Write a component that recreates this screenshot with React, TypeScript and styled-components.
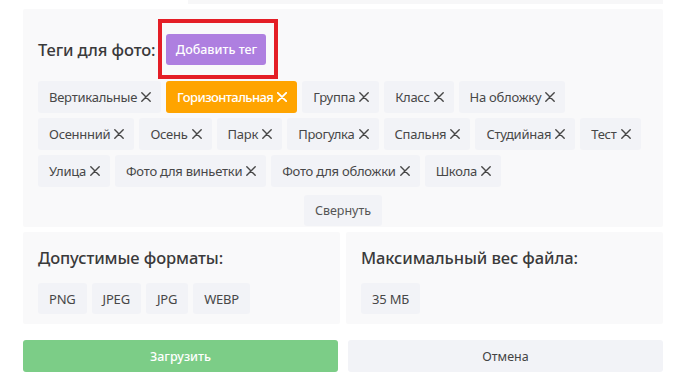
import React from "react";
import styled, { createGlobalStyle } from "styled-components";

const GlobalStyle = createGlobalStyle`
  html, body { margin: 0; padding: 0; background: #ffffff; }
  body { font-family: "Noto Sans", "Open Sans", sans-serif; color: #444; }
  * { box-sizing: border-box; }
`;

const Page = styled.div`
  width: 682px;
  height: 387px;
  padding: 0 19px 0 23px;
  display: flex;
  flex-direction: column;
  overflow: hidden;
`;

const TopStrip = styled.div`
  margin-left: 165px;
  height: 4px;
  background: #f7f7f8;
`;

const Panel = styled.section`
  background: #f9f9fa;
  border-radius: 2px;
`;

const TagPanel = styled(Panel)`
  margin-top: 5px;
  padding: 25px 15px 1px 15px;
  display: flex;
  flex-direction: column;
`;

const HeaderRow = styled.div`
  display: flex;
  align-items: center;
  gap: 11px;
  height: 31px;
`;

const Title = styled.h3`
  margin: 0;
  font-size: 16.5px;
  font-weight: 500;
  color: #3a3a3a;
  letter-spacing: -0.1px;
`;

const Highlight = styled.div`
  position: relative;
  display: flex;
  &::after {
    content: "";
    position: absolute;
    top: -15px;
    left: -8px;
    right: -12px;
    bottom: -14px;
    border: 4px solid #e41e26;
    pointer-events: none;
  }
`;

const AddButton = styled.button`
  height: 31px;
  width: 100px;
  border: none;
  border-radius: 3px;
  background: #ae7fe0;
  color: #fff;
  font-family: inherit;
  font-size: 12.5px;
  font-weight: 500;
  padding: 0;
  cursor: pointer;
`;

const TagList = styled.div`
  margin-top: 16px;
  display: flex;
  flex-wrap: wrap;
  gap: 5px 5px;
`;

const Chip = styled.span<{ $active?: boolean }>`
  height: 32px;
  display: inline-flex;
  align-items: center;
  gap: 4px;
  padding: 0 10px 0 11px;
  border-radius: 3px;
  background: ${(p) => (p.$active ? "#ffa400" : "#f2f3f7")};
  color: ${(p) => (p.$active ? "#fff" : "#474747")};
  font-size: 13px;
  font-weight: ${(p) => (p.$active ? 500 : 400)};
  letter-spacing: ${(p) => (p.$active ? "-0.6px" : "-0.25px")};
  white-space: nowrap;
`;

const CloseIcon = styled.svg`
  width: 10px;
  height: 10px;
  flex: none;
`;

const Collapse = styled.button`
  align-self: center;
  margin-top: 8px;
  height: 31px;
  padding: 0 11px;
  border: none;
  border-radius: 3px;
  background: #f2f3f7;
  color: #555;
  font-family: inherit;
  font-size: 12.5px;
`;

const InfoGrid = styled.div`
  margin-top: 5px;
  display: grid;
  grid-template-columns: 317px 317px;
  gap: 6px;
`;

const InfoPanel = styled(Panel)`
  height: 92px;
  padding: 15px 15px 0 15px;
`;

const InfoTitle = styled.h3`
  margin: 0 0 14px 0;
  font-size: 16.5px;
  font-weight: 500;
  color: #3a3a3a;
  line-height: 22px;
  letter-spacing: -0.1px;
`;

const ChipRow = styled.div`
  display: flex;
  gap: 5px;
`;

const FormatChip = styled.span`
  height: 31px;
  display: inline-flex;
  align-items: center;
  padding: 0 11px;
  border-radius: 3px;
  background: #f2f3f7;
  color: #474747;
  font-size: 13px;
  letter-spacing: -0.2px;
`;

const Actions = styled.div`
  margin-top: 16px;
  display: grid;
  grid-template-columns: 315px 315px;
  justify-content: space-between;
`;

const ActionButton = styled.button<{ $primary?: boolean }>`
  height: 32px;
  border: none;
  border-radius: 3px;
  background: ${(p) => (p.$primary ? "#7ccd87" : "#f2f3f7")};
  color: ${(p) => (p.$primary ? "#fff" : "#444")};
  font-family: inherit;
  font-size: 12.5px;
  font-weight: ${(p) => (p.$primary ? 500 : 400)};
`;

const X = ({ active }: { active?: boolean }) => (
  <CloseIcon viewBox="0 0 10 10">
    <path
      d="M0.8 0.8 L9.2 9.2 M9.2 0.8 L0.8 9.2"
      stroke="currentColor"
      strokeWidth={active ? 1.8 : 1.4}
      strokeLinecap="round"
      fill="none"
    />
  </CloseIcon>
);

const tags = [
  "Вертикальные",
  "Горизонтальная",
  "Группа",
  "Класс",
  "На обложку",
  "Осеннний",
  "Осень",
  "Парк",
  "Прогулка",
  "Спальня",
  "Студийная",
  "Тест",
  "Улица",
  "Фото для виньетки",
  "Фото для обложки",
  "Школа",
];

const formats = ["PNG", "JPEG", "JPG", "WEBP"];

export default function App() {
  return (
    <>
      <GlobalStyle />
      <Page>
        <TopStrip />
        <TagPanel>
          <HeaderRow>
            <Title>Теги для фото:</Title>
            <Highlight>
              <AddButton>Добавить тег</AddButton>
            </Highlight>
          </HeaderRow>
          <TagList>
            {tags.map((t) => {
              const active = t === "Горизонтальная";
              return (
                <Chip key={t} $active={active}>
                  {t}
                  <X active={active} />
                </Chip>
              );
            })}
          </TagList>
          <Collapse>Свернуть</Collapse>
        </TagPanel>
        <InfoGrid>
          <InfoPanel>
            <InfoTitle>Допустимые форматы:</InfoTitle>
            <ChipRow>
              {formats.map((f) => (
                <FormatChip key={f}>{f}</FormatChip>
              ))}
            </ChipRow>
          </InfoPanel>
          <InfoPanel>
            <InfoTitle>Максимальный вес файла:</InfoTitle>
            <ChipRow>
              <FormatChip>35 МБ</FormatChip>
            </ChipRow>
          </InfoPanel>
        </InfoGrid>
        <Actions>
          <ActionButton $primary>Загрузить</ActionButton>
          <ActionButton>Отмена</ActionButton>
        </Actions>
      </Page>
    </>
  );
}
